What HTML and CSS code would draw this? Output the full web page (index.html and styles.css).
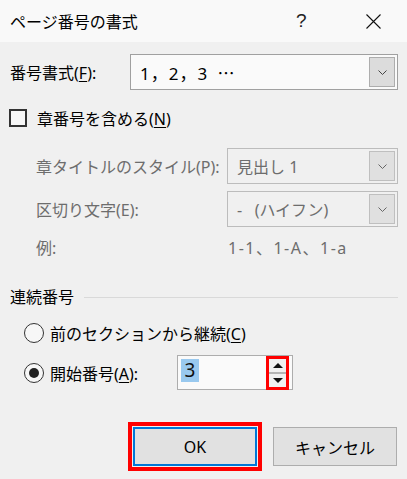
FILE: index.html
```html
<!DOCTYPE html>
<html lang="ja">
<head>
    <meta charset="UTF-8">
    <title>ページ番号の書式</title>
    <link rel="stylesheet" href="styles.css">
</head>
<body>
    <div class="dialog">
        <div class="titlebar">
            <span class="title">ページ番号の書式</span>
            <span class="help">?</span>
            <span class="close">
                <svg width="15" height="15" viewBox="0 0 15 15"><path d="M0.5 0.5 L14.5 14.5 M14.5 0.5 L0.5 14.5" stroke="#111" stroke-width="1.1" fill="none"/></svg>
            </span>
        </div>

        <div class="content">
            <!-- 番号書式 -->
            <div class="row row-format">
                <label class="label">番号書式(<u>F</u>):</label>
                <div class="combo">
                    <span class="combo-text">1，2，3 <span class="cjk">…</span></span>
                    <span class="combo-btn"><svg width="9" height="5" viewBox="0 0 9 5"><path d="M0.5 0.5 L4.5 4.5 L8.5 0.5" stroke="#444" fill="none"/></svg></span>
                </div>
            </div>

            <div class="row row-check">
                <span class="checkbox"></span>
                <span>章番号を含める(<u>N</u>)</span>
            </div>

            <div class="row row-style disabled">
                <span class="label indent">章タイトルのスタイル(P):</span>
                <div class="combo combo-off">
                    <span class="combo-text">見出し&nbsp;1</span>
                    <span class="combo-btn"><svg width="9" height="5" viewBox="0 0 9 5"><path d="M0.5 0.5 L4.5 4.5 L8.5 0.5" stroke="#666" fill="none"/></svg></span>
                </div>
            </div>

            <div class="row row-sep disabled">
                <span class="label indent">区切り文字(E):</span>
                <div class="combo combo-off">
                    <span class="combo-text">-&nbsp;&nbsp;&nbsp;(ハイフン)</span>
                    <span class="combo-btn"><svg width="9" height="5" viewBox="0 0 9 5"><path d="M0.5 0.5 L4.5 4.5 L8.5 0.5" stroke="#666" fill="none"/></svg></span>
                </div>
            </div>

            <div class="row row-example disabled">
                <span class="label indent">例:</span>
                <span class="example">1-1、1-A、1-a</span>
            </div>

            <!-- 連続番号 -->
            <div class="row group-head">
                <span>連続番号</span>
                <span class="group-line"></span>
            </div>

            <div class="row row-radio">
                <span class="radio"></span>
                <span>前のセクションから継続(<u>C</u>)</span>
            </div>

            <div class="row row-start">
                <span class="radio checked"></span>
                <span class="start-label">開始番号(<u>A</u>):</span>
                <div class="spin">
                    <span class="spin-value">3</span>
                    <span class="spin-btns">
                        <span class="arrow-up"></span>
                        <span class="spin-divider"></span>
                        <span class="arrow-down"></span>
                    </span>
                </div>
            </div>

            <div class="row buttons">
                <button class="btn btn-ok">OK</button>
                <button class="btn">キャンセル</button>
            </div>
        </div>
    </div>
</body>
</html>
```

FILE: styles.css
```css
/* styles.css */
html, body {
    margin: 0;
    padding: 0;
    background: #f0f0f0;
}

body {
    font-family: "Noto Sans", "Noto Sans CJK JP", sans-serif;
    font-size: 16px;
    color: #000;
}

.dialog {
    width: 407px;
    height: 479px;
    overflow: hidden;
}

.titlebar {
    height: 42px;
    background: #f9f9f9;
    display: flex;
    align-items: center;
    padding-left: 10px;
}

.title {
    flex: 1;
}

.help {
    width: 8px;
    margin-right: 62px;
    color: #222;
    font-family: "Liberation Sans", sans-serif;
    font-size: 19px;
    font-weight: 300;
}

.close {
    display: flex;
    margin-right: 26px;
}

.content {
    padding: 0 9px 0 10px;
}

.row {
    display: flex;
    align-items: center;
}

u {
    text-decoration-thickness: 1px;
    text-underline-offset: 2px;
}

.cjk {
    font-family: "Noto Sans CJK JP", sans-serif;
}

.label {
    width: 120px;
}

.indent {
    padding-left: 26px;
    width: 191px;
}

.disabled {
    color: #6d6d6d;
}

/* combo boxes */
.combo {
    flex: 1;
    height: 36px;
    box-sizing: border-box;
    border: 1px solid #a0a0a0;
    background: #fafafa;
    display: flex;
    align-items: center;
    padding: 2px 2px 2px 9px;
}

.combo-text {
    flex: 1;
}

.row-format .combo-text {
    font-size: 17px;
    word-spacing: 4px;
    letter-spacing: 1px;
}

.combo-btn {
    width: 26px;
    height: 30px;
    box-sizing: border-box;
    border: 1px solid #adadad;
    background: #dcdcdc;
    display: flex;
    align-items: center;
    justify-content: center;
}

.combo-off {
    background: #f0f0f0;
    border-color: #bcbcbc;
}

.combo-off .combo-btn {
    border-color: #bfbfbf;
    background: #e0e0e0;
}

.row-format {
    margin-top: 12px;
    height: 36px;
}

.row-check {
    margin-top: 18px;
    height: 20px;
}

.checkbox {
    width: 18px;
    height: 18px;
    box-sizing: border-box;
    border: 2px solid #333;
    background: #f7f7f7;
    margin-right: 10px;
    margin-left: -1px;
}

.row-style {
    margin-top: 20px;
    height: 36px;
}

.row-sep {
    margin-top: 7px;
    height: 36px;
}

.row-example {
    margin-top: 10px;
    height: 20px;
}

.example {
    padding-left: 1px;
    letter-spacing: 1.5px;
}

.group-head {
    margin-top: 29px;
    height: 20px;
}

.group-line {
    flex: 1;
    height: 1px;
    background: #d9d9d9;
    margin-left: 10px;
    margin-top: 2px;
}

/* radios */
.radio {
    width: 20px;
    height: 20px;
    box-sizing: border-box;
    border: 1.5px solid #333;
    border-radius: 50%;
    background: #f7f7f7;
    margin-left: 14px;
    margin-right: 6px;
    display: flex;
    align-items: center;
    justify-content: center;
}

.radio.checked::after {
    content: "";
    width: 10px;
    height: 10px;
    border-radius: 50%;
    background: #222;
}

.row-radio {
    margin-top: 17px;
    height: 20px;
}

.row-start {
    margin-top: 12px;
    height: 35px;
}

.start-label {
    width: 127px;
}

.spin {
    width: 116px;
    height: 35px;
    box-sizing: border-box;
    border: 1px solid #adadad;
    background: #fafafa;
    display: flex;
    align-items: center;
    padding: 2px;
}

.spin-value {
    flex: 0 0 auto;
    align-self: flex-start;
    background: #99c9ef;
    width: 18px;
    height: 23px;
    line-height: 23px;
    font-size: 19px;
    text-align: center;
    margin: 1px 0 0 1px;
    color: #111;
}

.spin-btns {
    margin-left: auto;
    width: 23px;
    height: 34px;
    box-sizing: border-box;
    border: 3px solid #f00;
    display: flex;
    flex-direction: column;
    align-items: center;
    justify-content: space-between;
    padding: 4px 0 4px;
    margin-right: 1px;
    background: #f0f0f0;
}

.arrow-up {
    width: 0;
    height: 0;
    border-left: 5px solid transparent;
    border-right: 5px solid transparent;
    border-bottom: 5px solid #111;
}

.arrow-down {
    width: 0;
    height: 0;
    border-left: 5px solid transparent;
    border-right: 5px solid transparent;
    border-top: 5px solid #111;
}

.spin-divider {
    width: 100%;
    height: 2px;
    background: #b4b4b4;
}

/* buttons */
.buttons {
    margin-top: 37px;
    justify-content: flex-end;
    gap: 16px;
    padding-right: 1px;
}

.btn {
    width: 124px;
    height: 39px;
    box-sizing: border-box;
    border: 1px solid #adadad;
    background: #e1e1e1;
    font-family: "Noto Sans", "Noto Sans CJK JP", sans-serif;
    font-size: 16px;
    color: #000;
    padding: 0;
}

.btn-ok {
    border: 2px solid #0078d7;
    outline: 4px solid #f00;
    outline-offset: 1px;
}
```
